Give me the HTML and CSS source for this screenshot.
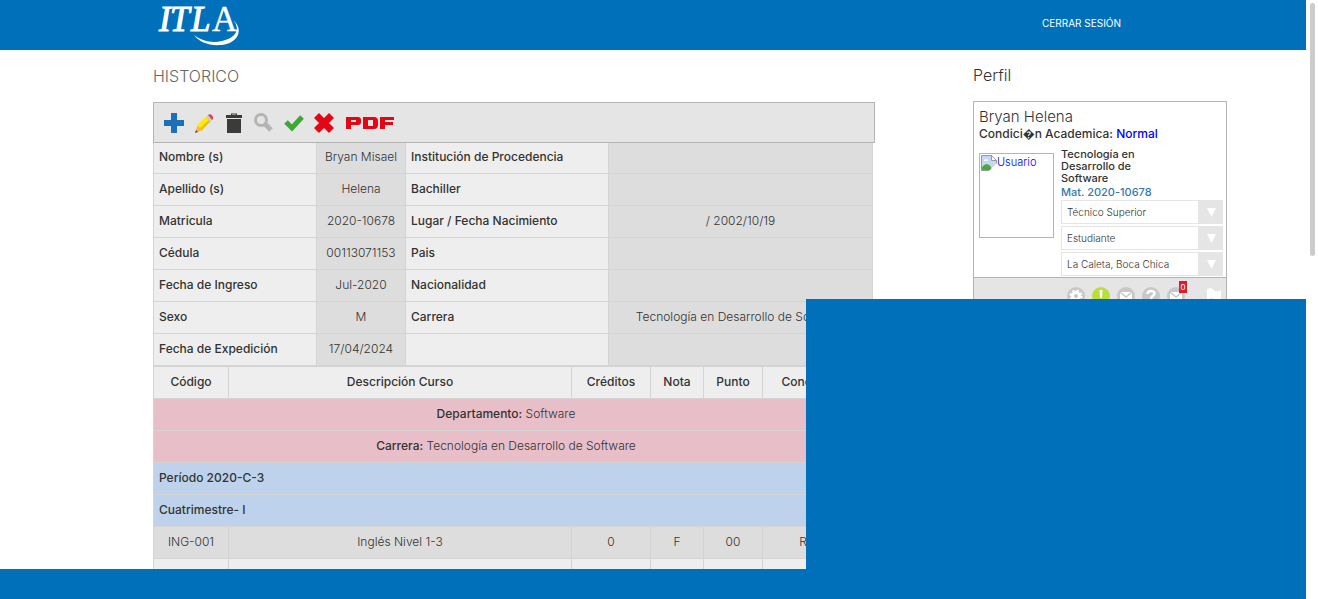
FILE: index.html
```
<!DOCTYPE html>
<html lang="es">
<head>
<meta charset="utf-8">
<title>Histórico - ITLA</title>
<link rel="stylesheet" href="styles.css">
</head>
<body>
<div class="page">
  <header class="topbar">
    <a class="logo" href="#" aria-label="ITLA">
      <svg width="84" height="46" viewBox="0 -2 84 46" fill="#fff">
        <g font-family="Liberation Serif, serif" font-style="italic" font-size="35" stroke="#fff">
          <text x="2" y="27" stroke-width="1">I</text>
          <text x="13" y="27" stroke-width="1">T</text>
          <text x="34" y="27" stroke-width="1">L</text>
          <text x="55" y="27" font-style="normal" stroke-width=".3">A</text>
        </g>
        <path d="M76 16C88 26 80 40 64 41C52 42 42 38 37 31C46 38 56 39 65 37C79 34 84 25 76 16Z"/>
      </svg>
    </a>
    <a class="logout" href="#">CERRAR SESIÓN</a>
  </header>

  <div class="content">
    <main>
      <h1 class="title">HISTORICO</h1>
      <div class="toolbar">
        <button type="button" aria-label="Agregar"><svg viewBox="0 0 22 22"><path fill="#1c70b8" d="M8 1h6v7h7v6h-7v7H8v-7H1V8h7z"/></svg></button>
        <button type="button" aria-label="Editar"><svg viewBox="0 0 22 22"><path fill="#f5b64f" d="M2 21l3-9 5 6z"/><path fill="#555" d="M2 21l1-3 2 2z"/><path fill="#ffe70f" d="M4 13L14 4l4 5L9 18z"/><path fill="#eac400" d="M7 16L17 7l1 2L9 18z"/><path fill="#ccc" d="M13 5l2-2 4 5-2 2z"/><path fill="#e0454d" d="M15 3c2-2 6 1 5 4l-1 1z"/></svg></button>
        <button type="button" aria-label="Eliminar"><svg viewBox="0 0 22 22"><path fill="#3b3b3a" fill-rule="evenodd" d="M3 3h5V1.500h6V3h5v3H3zM9 2.500V3h4v-.5zM4 7h14v14H4z"/></svg></button>
        <button type="button" aria-label="Buscar"><svg viewBox="0 0 22 22" fill="none" stroke="#b4b4b4"><circle cx="8" cy="8" r="5.500" stroke-width="3"/><path d="M12 12l6 6" stroke-width="5"/></svg></button>
        <button type="button" aria-label="Aceptar"><svg viewBox="0 0 22 22"><path fill="none" stroke="#3aaa35" stroke-width="5" d="M3 10l6 6L19 5"/></svg></button>
        <button type="button" aria-label="Cancelar"><svg viewBox="0 0 22 22"><path fill="none" stroke="#e30613" stroke-width="7" d="M3.500 3.500l15 15m0-15l-15 15"/></svg></button>
        <button class="pdf" type="button" aria-label="PDF"><svg viewBox="0 0 50 14"><path fill="#e30613" fill-rule="evenodd" d="M1 1h12q3 0 3 3v2q0 3-3 3H6v4H1zM6 4v2h5V4zM18 1h11q4 0 4 4v4q0 4-4 4H18zM23 4v6h5V4zM35 1h14v3h-9v2h8v3h-8v4h-5z"/></svg></button>
      </div>

      <table class="grid info">
        <colgroup><col class="i1"><col class="i2"><col class="i3"><col></colgroup>
        <tr><th>Nombre (s)</th><td>Bryan Misael</td><th>Institución de Procedencia</th><td></td></tr>
        <tr><th>Apellido (s)</th><td>Helena</td><th>Bachiller</th><td></td></tr>
        <tr><th>Matricula</th><td>2020-10678</td><th>Lugar / Fecha Nacimiento</th><td>/ 2002/10/19</td></tr>
        <tr><th>Cédula</th><td>00113071153</td><th>Pais</th><td></td></tr>
        <tr><th>Fecha de Ingreso</th><td>Jul-2020</td><th>Nacionalidad</th><td></td></tr>
        <tr><th>Sexo</th><td>M</td><th>Carrera</th><td>Tecnología en Desarrollo de Software</td></tr>
        <tr><th>Fecha de Expedición</th><td>17/04/2024</td><th></th><td></td></tr>
      </table>

      <table class="grid courses">
        <colgroup><col class="c1"><col><col class="c3"><col class="c4"><col class="c5"><col class="c6"><col class="c7"></colgroup>
        <tr class="head"><th>Código</th><th>Descripción Curso</th><th>Créditos</th><th>Nota</th><th>Punto</th><th>Condición</th><th></th></tr>
        <tr class="pink"><td colspan="6"><b>Departamento:</b> Software</td><td></td></tr>
        <tr class="pink"><td colspan="6"><b>Carrera:</b> Tecnología en Desarrollo de Software</td><td></td></tr>
        <tr class="blue"><th colspan="7">Período 2020-C-3</th></tr>
        <tr class="blue"><th colspan="7">Cuatrimestre- I</th></tr>
        <tr><td>ING-001</td><td>Inglés Nivel 1-3</td><td>0</td><td>F</td><td>00</td><td>REP</td><td></td></tr>
        <tr class="light"><td></td><td></td><td></td><td></td><td></td><td></td><td></td></tr>
      </table>
    </main>

    <aside>
      <h2 class="title side">Perfil</h2>
      <section class="card">
        <div class="who">
          <p class="name">Bryan Helena</p>
          <p class="status">Condici&#xFFFD;n Academica: <span>Normal</span></p>
        </div>
        <div class="details">
          <a class="photo" href="#">
            <svg width="16" height="16" viewBox="0 0 16 16"><path fill="#c4d7f5" stroke="#999" d="M.5.500h10l5 5v10H.500z"/><path fill="#fff" stroke="#999" d="M10.500.500v5h5z"/><path fill="#fff" d="M3 6q0-2 2-2 2 0 2 2z"/><path fill="#4caa3c" d="M1 15v-3q5-6 9 0l1 3z"/><path fill="#fff" d="M16 8L8 16h8z"/></svg><span>Usuario</span>
          </a>
          <div class="data">
            <p class="degree">Tecnología en Desarrollo de Software</p>
            <p class="mat">Mat. 2020-10678</p>
            <label class="pick"><select aria-label="Nivel"><option>Técnico Superior</option></select><svg viewBox="0 0 24 24"><path d="M8 8h9l-4.500 9z"/></svg></label>
            <label class="pick"><select aria-label="Rol"><option>Estudiante</option></select><svg viewBox="0 0 24 24"><path d="M8 8h9l-4.500 9z"/></svg></label>
            <label class="pick"><select aria-label="Recinto"><option>La Caleta, Boca Chica</option></select><svg viewBox="0 0 24 24"><path d="M8 8h9l-4.500 9z"/></svg></label>
          </div>
        </div>
        <div class="actions">
          <button type="button" aria-label="Configuración"><svg viewBox="0 0 18 18"><circle cx="9" cy="9" r="9" fill="#c8c8c8"/><circle cx="9" cy="9" r="3.500" fill="none" stroke="#fff" stroke-width="3"/><circle cx="9" cy="9" r="5.500" fill="none" stroke="#fff" stroke-width="2" stroke-dasharray="2.200 2.120"/></svg></button>
          <button type="button" aria-label="Avisos"><svg viewBox="0 0 18 18"><circle cx="9" cy="9" r="9" fill="#b9df3c"/><path fill="#fff" d="M7.500 3h3l-.5 8H8zM8 13h2v2H8z"/></svg></button>
          <button type="button" aria-label="Correo"><svg viewBox="0 0 18 18"><circle cx="9" cy="9" r="9" fill="#c8c8c8"/><path fill="#fff" d="M3 5h12v8H3z"/><path fill="none" stroke="#c8c8c8" stroke-width="1.500" d="M3 5l6 5 6-5"/></svg></button>
          <button type="button" aria-label="Ayuda"><svg viewBox="0 0 18 18"><circle cx="9" cy="9" r="9" fill="#c8c8c8"/><path fill="none" stroke="#fff" stroke-width="2.500" d="M5.500 7c0-4 7-4 7-.5C12.500 9 9 8.500 9 12"/><path fill="#fff" d="M8 13h2.500v2H8z"/></svg></button>
          <button class="inbox" type="button" aria-label="Mensajes"><svg viewBox="0 0 18 18"><circle cx="9" cy="9" r="9" fill="#c8c8c8"/><path fill="#fff" d="M3 5h12v8H3z"/><path fill="none" stroke="#c8c8c8" stroke-width="1.500" d="M3 5l6 5 6-5"/></svg><span class="badge">0</span></button>
          <button class="flag" type="button" aria-label="Reportar"><svg viewBox="0 0 18 18"><path fill="#fff" d="M2 2q4-2 7 1t7 0v9q-4 2-7 0t-5 0v6H2z"/></svg></button>
        </div>
      </section>
    </aside>
  </div>

  <footer class="bottombar"></footer>
  <div class="panel"></div>
</div>
<div class="scroll"><div class="thumb"></div></div>
</body>
</html>
```
FILE: styles.css
```
* { box-sizing: border-box; }
body {
  margin: 0;
  height: 100vh;
  display: flex;
  overflow: hidden;
  background: #fff;
  color: #333;
  font: 300 12px/16px "Century Gothic", Inter, "Open Sans", sans-serif;
}
h1, h2, p { margin: 0; font-weight: 300; }
a { text-decoration: none; }
button { border: 0; padding: 0; background: none; }
svg { display: block; }

.page {
  position: relative;
  flex: 1;
  min-width: 0;
  overflow: hidden;
}
.topbar {
  height: 50px;
  display: flex;
  justify-content: space-between;
  align-items: center;
  padding: 0 185px 0 157px;
  background: #0070bb;
}
.logo svg { overflow: visible; }
.logout { color: #fff; font-size: 10px; font-weight: 400; margin-bottom: 4px; }

.content {
  display: grid;
  grid-template-columns: minmax(0, 1fr) 254px;
  gap: 98px;
  padding: 0 79px 0 153px;
}
.title {
  height: 52px;
  font-size: 16px;
  line-height: 52px;
  color: #666;
}
.side { height: 51px; line-height: 50px; color: #333; }

.toolbar {
  display: flex;
  align-items: center;
  gap: 8px;
  height: 41px;
  padding-left: 9px;
  background: #e5e5e5;
  border: 1px solid #b4b4b4;
}
.toolbar svg { width: 22px; height: 22px; }
.toolbar .pdf { margin-left: 2px; }
.toolbar .pdf svg { width: 50px; height: 14px; }

.grid {
  width: calc(100% - 2px);
  table-layout: fixed;
  border-collapse: separate;
  border-spacing: 0;
  border-left: 1px solid #d4d4d4;
}
.grid th, .grid td {
  height: 32px;
  padding: 0 5px 2px;
  border: solid #d4d4d4;
  border-width: 0 1px 1px 0;
  white-space: nowrap;
}
.grid th { background: #eee; text-align: left; font-weight: 500; }
.grid td { background: #ddd; text-align: center; }
.info tr:first-child > * { height: 31px; }
.grid b { font-weight: 500; }
.i1 { width: 163px; }
.i2 { width: 89px; }
.i3 { width: 203px; }
.courses { border-top: 1px solid #d4d4d4; }
.c1 { width: 75px; }
.c3 { width: 79px; }
.c4 { width: 53px; }
.c5 { width: 59px; }
.c6 { width: 96px; }
.c7 { width: 14px; }
.courses .head th { text-align: center; }
.courses .pink td { background: #e8bfc8; }
.courses .blue th { background: #bed3eb; }
.courses .light td { background: #eee; }

.card { border: 1px solid #b4b4b4; }
.who { padding: 6px 5px 0; }
.name { font-size: 15px; line-height: 18px; }
.status { font-weight: 500; line-height: 16px; }
.status span { color: #00f; }
.details {
  display: flex;
  gap: 7px;
  padding: 6px 3px 0 5px;
  margin-top: 5px;
}
.photo {
  display: flex;
  width: 75px;
  height: 85px;
  border: 1px solid #b4b4b4;
  color: #00f;
  font-size: 11px;
}
.photo svg { flex: none; margin: 1px 0 0 1px; }
.data { flex: 1; min-width: 0; margin-top: -5px; }
.degree { width: 90px; font-size: 11px; line-height: 12px; font-weight: 500; }
.mat { color: #3379ab; font-size: 11px; line-height: 16px; font-weight: 500; }
.pick {
  display: flex;
  height: 24px;
  margin-bottom: 2px;
  background: #e5e5e5;
}
.pick:last-child { margin-bottom: 1px; }
.pick select {
  flex: 1;
  min-width: 0;
  appearance: none;
  padding: 0 5px;
  border: 1px solid #e5e5e5;
  border-radius: 0;
  background: #fff;
  color: #333;
  font: 300 10px/16px "Century Gothic", Inter, "Open Sans", sans-serif;
}
.pick svg { width: 24px; height: 24px; fill: #fff; }
.actions {
  display: flex;
  gap: 7px;
  height: 40px;
  padding: 9px 3px 0 93px;
  border-top: 1px solid #b4b4b4;
  background: #e5e5e5;
}
.actions button { height: 18px; }
.actions svg { width: 18px; height: 18px; }
.actions .flag { margin-left: auto; }
.inbox { position: relative; }
.badge {
  position: absolute;
  top: -6px;
  right: -2px;
  width: 8px;
  background: #d81c2c;
  color: #fff;
  font-size: 9px;
  line-height: 12px;
  font-weight: 500;
}

.bottombar {
  position: absolute;
  left: 0;
  right: 0;
  bottom: 0;
  height: 30px;
  background: #0070bb;
}
.panel {
  position: absolute;
  right: 0;
  bottom: 0;
  width: 500px;
  height: 300px;
  background: #0070bb;
}
.scroll { width: 12px; padding: 3px 3px 0 4px; }
.thumb { height: 253px; border-radius: 3px; background: #ccc; }
```
